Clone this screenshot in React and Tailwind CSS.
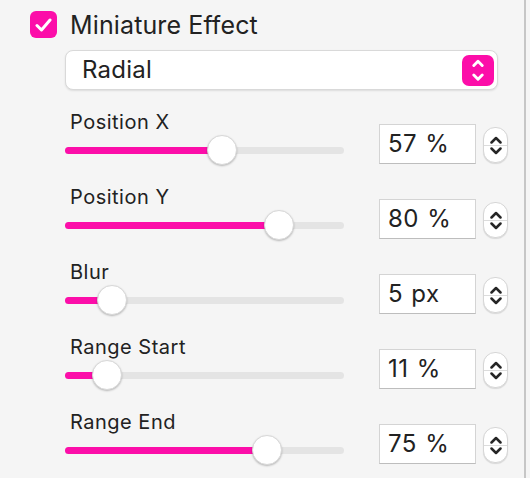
import React from 'react';

const PINK = '#fc0ea9';

const rows = [
  { label: 'Position X', value: '57 %', pos: 0.57 },
  { label: 'Position Y', value: '80 %', pos: 0.8 },
  { label: 'Blur', value: '5 px', pos: 0.13 },
  { label: 'Range Start', value: '11 %', pos: 0.11 },
  { label: 'Range End', value: '75 %', pos: 0.75 },
];

function Chevrons({ color, size = 10, stroke = 2.4 }) {
  return (
    <svg width={size} height={size * 2.2} viewBox="0 0 10 22" fill="none" stroke={color} strokeWidth={stroke} strokeLinecap="round" strokeLinejoin="round">
      <path d="M1.5 7 L5 3.5 L8.5 7" />
      <path d="M1.5 15 L5 18.5 L8.5 15" />
    </svg>
  );
}

function Slider({ pos }) {
  // thumb centre travels from 15px to (width - 15px)
  const center = 15 + pos * (279 - 30);
  return (
    <div className="relative h-[30px] w-[279px]">
      <div className="absolute left-0 right-0 top-[12px] h-[7px] rounded-full bg-[#e4e4e4]" />
      <div className="absolute left-0 top-[12px] h-[7px] rounded-full" style={{ width: center, background: PINK }} />
      <div
        className="absolute top-0 h-[30px] w-[30px] rounded-full bg-white border border-[#d8d8d8] shadow-[0_1px_2px_rgba(0,0,0,0.25)]"
        style={{ left: center - 15 }}
      />
    </div>
  );
}

function Stepper() {
  return (
    <div className="flex h-[36px] w-[25px] flex-col items-center rounded-[12px] border border-[#d6d6d6] bg-white shadow-[0_1px_1px_rgba(0,0,0,0.12)]">
      <div className="flex h-[17px] items-end pb-[1px]">
        <svg width="12" height="8" viewBox="0 0 12 8" fill="none" stroke="#262626" strokeWidth="2.5" strokeLinecap="round" strokeLinejoin="round">
          <path d="M1.5 6.5 L6 2 L10.5 6.5" />
        </svg>
      </div>
      <div className="h-px w-full bg-[#dcdcdc]" />
      <div className="flex h-[17px] items-start pt-[2px]">
        <svg width="12" height="8" viewBox="0 0 12 8" fill="none" stroke="#262626" strokeWidth="2.5" strokeLinecap="round" strokeLinejoin="round">
          <path d="M1.5 1.5 L6 6 L10.5 1.5" />
        </svg>
      </div>
    </div>
  );
}

export default function App() {
  return (
    <div className="h-[478px] w-[530px] bg-[#f5f5f5] text-[#222] font-['Inter','Liberation_Sans',sans-serif] overflow-hidden">
      <div className="h-full w-[526px] border-r-2 border-[#c6c6c6] pl-[30px] pt-[11px]">
        <div className="flex h-[27px] items-center gap-[13px]">
          <div className="flex h-[27px] w-[27px] items-center justify-center rounded-[6px]" style={{ background: PINK }}>
            <svg width="17" height="14" viewBox="0 0 17 14" fill="none" stroke="white" strokeWidth="3" strokeLinecap="round" strokeLinejoin="round">
              <path d="M2 7.5 L6.5 12 L15 2" />
            </svg>
          </div>
          <span className="text-[25px] leading-[28px] tracking-[0.005em]">Miniature Effect</span>
        </div>

        <div className="ml-[35px] mt-[12px] flex h-[40px] w-[433px] items-center justify-between rounded-[8px] border border-[#d9d9d9] bg-white pl-[16px] pr-[3px] shadow-[0_1px_2px_rgba(0,0,0,0.1)]">
          <span className="text-[24px] leading-[28px] tracking-[0.01em]">Radial</span>
          <div className="flex h-[31px] w-[32px] items-center justify-center rounded-[7px]" style={{ background: PINK }}>
            <Chevrons color="white" size={12} stroke={2.4} />
          </div>
        </div>

        <div className="ml-[35px] mt-[21px] flex flex-col">
          {rows.map((r) => (
            <div key={r.label} className="flex h-[75px] items-start">
              <div className="flex w-[279px] flex-col">
                <span className="pl-[5px] text-[20px] leading-[22px] tracking-[0.025em]">{r.label}</span>
                <div className="mt-[2px]">
                  <Slider pos={r.pos} />
                </div>
              </div>
              <div className="ml-[35px] mt-[13px] flex h-[40px] w-[97px] items-center border border-[#d4d4d4] border-b-[#bdbdbd] bg-white pl-[8px] text-[24px] tracking-[0.02em] [word-spacing:1px]">
                {r.value}
              </div>
              <div className="ml-[7px] mt-[16px]">
                <Stepper />
              </div>
            </div>
          ))}
        </div>
      </div>
    </div>
  );
}
